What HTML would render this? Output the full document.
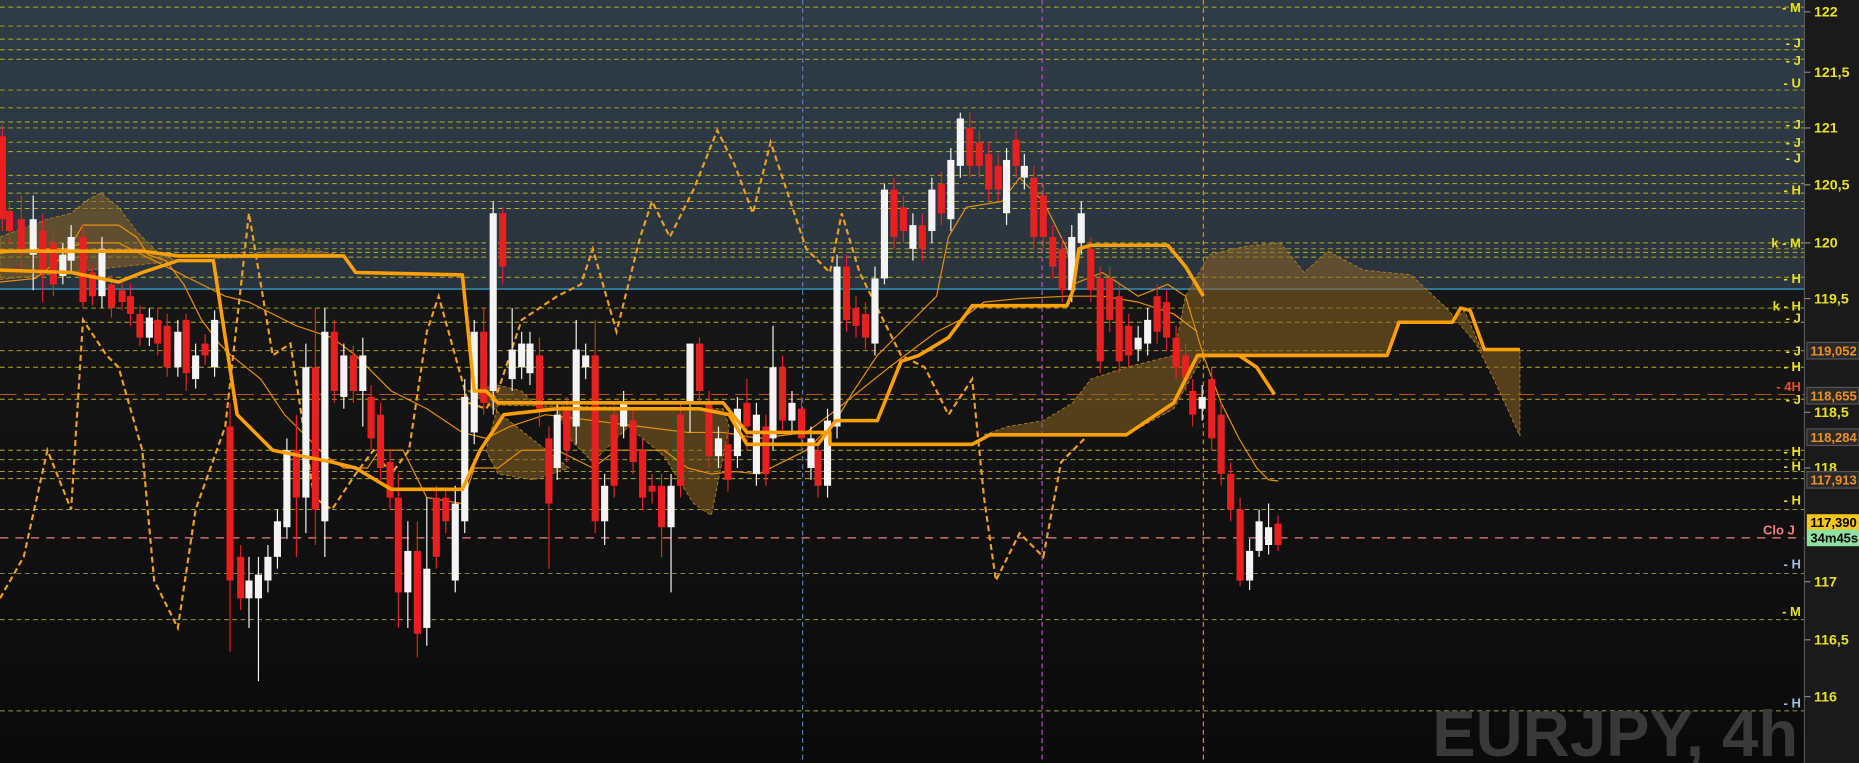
<!DOCTYPE html>
<html><head><meta charset="utf-8"><style>
html,body{margin:0;padding:0;background:#111;overflow:hidden}
svg{display:block}
</style></head><body>
<svg id="c" width="1859" height="763" viewBox="0 0 1568 644" preserveAspectRatio="none" xmlns="http://www.w3.org/2000/svg" font-family="Liberation Sans, sans-serif">
<defs>
<linearGradient id="bg" x1="0" y1="0" x2="0" y2="1">
<stop offset="0" stop-color="#1e1e1e"/><stop offset="1" stop-color="#0a0a0a"/></linearGradient>
<linearGradient id="up" x1="0" y1="0" x2="0" y2="1">
<stop offset="0" stop-color="#2e3c48"/><stop offset="1" stop-color="#2a343d"/></linearGradient>
</defs>
<rect x="0" y="0" width="1568" height="644" fill="url(#bg)"/>
<rect x="0" y="0" width="1522" height="244" fill="url(#up)"/>
<rect x="1522" y="0" width="46" height="644" fill="#1a1a1a"/>
<g id="levels"></g>
<line x1="0" y1="244" x2="1522" y2="244" stroke="#3ab0e8" stroke-width="1"/>
<line x1="677" y1="0" x2="677" y2="644" stroke="#5a7ad0" stroke-dasharray="4,3"/>
<line x1="879" y1="0" x2="879" y2="644" stroke="#c050d0" stroke-dasharray="4,3"/>
<line x1="1015" y1="0" x2="1015" y2="644" stroke="#d09030" stroke-dasharray="4,3"/>
<line x1="0" y1="454" x2="1522" y2="454" stroke="#f08080" stroke-dasharray="7,6"/>
<g fill="#8b6424" fill-opacity="0.55" stroke="#b07a20" stroke-dasharray="3,2" stroke-width="0.8">
<polygon points="0,200 40,185 60,180 75,168 85,163 100,175 115,195 135,215 150,220 0,236"/>
<polygon points="210,215 235,210 270,212 290,216 180,218"/>
<polygon points="395,330 420,325 440,330 455,345 470,345 480,370 500,390 530,360 560,385 585,425 600,435 615,360 610,345 420,342 410,380 420,400 450,405 480,395 410,340"/>
<polygon points="830,367 850,360 880,355 905,340 920,320 950,310 990,300 1000,250 1020,215 1050,208 1080,205 1100,230 1120,212 1150,228 1190,232 1220,260 1245,290 1260,320 1282,368 1282,296 1250,296 1235,262 1225,272 1180,272 1170,300 1015,300 990,345 950,367"/>
</g>
<g id="thin" fill="none" stroke="#e8900a" stroke-width="1">
<polyline points="0,238 30,235 55,215 70,190 100,190 115,200 125,215 140,220 155,240 170,270 185,290 195,300 220,320 240,350 260,370 275,385 290,395 310,395 320,380 340,380 360,420 390,425 400,395 420,395 440,380 470,380 500,395 520,380 560,380 580,395 600,400 620,398 640,400 660,390 680,380 705,355 720,330 740,300 770,270 790,250 800,200 815,175 845,170 860,150 880,170 900,210 905,240 930,230 960,250 985,240 1000,250 1015,300 1030,340 1045,370 1060,395 1070,405 1078,406"/>
<polyline points="0,214 30,210 55,210 70,205 100,205 120,215 140,225 170,240 190,250 210,255 250,275 280,285 300,300 330,330 360,345 390,365 410,370 430,360 460,350 500,355 540,360 580,365 610,365 640,370 680,365 700,350 750,310 790,280 810,270 830,255 860,252 900,250 930,250 960,255 990,265 1010,280"/>
</g>
<polyline fill="none" stroke="#f0a020" stroke-width="1.8" stroke-dasharray="5,3" points="0,505 20,470 40,380 60,430 70,270 90,300 100,310 120,380 130,490 150,530 165,430 190,360 210,180 230,300 245,290 265,420 280,430 300,400 315,380 330,400 345,380 360,280 370,250 395,340 410,345 420,330 440,270 470,250 490,240 500,210 520,280 540,200 550,170 565,200 585,160 605,110 620,140 635,180 650,120 660,150 680,210 700,230 710,180 725,230 740,260 760,300 780,310 800,350 820,320 830,420 840,490 860,450 880,470 895,390 915,370"/>
<g id="candles"></g>
<g fill="none" stroke="#ffa000" stroke-width="3" stroke-linejoin="round">
<polyline points="0,212 120,212 150,216 290,216 300,230 390,232 400,330 410,330 420,340 610,340 630,365 700,365 700,375 820,375 835,367 950,367 990,340 1010,300 1045,300 1060,310 1075,333"/>
<polyline points="0,228 60,230 100,238 120,230 150,220 180,220 200,350 230,380 280,390 300,395 330,413 390,413 405,380 425,350 470,345 590,345 615,350 630,375 690,375 705,355 740,355 760,305 775,300 800,285 820,258 900,258 905,245 910,210 920,207 985,207 1000,225 1015,250"/>
<polyline points="1010,300 1170,300 1180,272 1225,272 1232,260 1240,262 1252,295 1282,295"/>
</g>
<line x1="1522" y1="0" x2="1522" y2="644" stroke="#555"/>
<g id="axis" font-size="12" font-weight="bold" fill="#e8e020"></g>
<g font-size="11" font-weight="bold">
<rect x="1524" y="289" width="44" height="14" fill="#2a2a2a" stroke="#555"/><text x="1527" y="300" fill="#f09020">119,052</text>
<rect x="1524" y="327" width="44" height="14" fill="#2a2a2a" stroke="#555"/><text x="1527" y="338" fill="#f09020">118,655</text>
<rect x="1524" y="362" width="44" height="14" fill="#2a2a2a" stroke="#555"/><text x="1527" y="373" fill="#f09020">118,284</text>
<rect x="1524" y="398" width="44" height="14" fill="#2a2a2a" stroke="#555"/><text x="1527" y="409" fill="#f09020">117,913</text>
<rect x="1524" y="434" width="44" height="14" fill="#f5c518"/><text x="1527" y="445" fill="#000">117,390</text>
<rect x="1524" y="447" width="44" height="14" fill="#90e0a0"/><text x="1527" y="458" fill="#000">34m45s</text>
</g>
<text x="1487" y="451" font-size="11" fill="#f08080" font-weight="bold">Clo J</text>
<text x="1208" y="638" font-size="55" font-weight="bold" fill="#393939">EURJPY, 4h</text>
</svg>
<script>
var NS="http://www.w3.org/2000/svg";
function el(t,a,p){var e=document.createElementNS(NS,t);for(var k in a)e.setAttribute(k,a[k]);p.appendChild(e);return e;}
var lv=document.getElementById('levels');
[6,22,33,42,50,76,91,103,108,120,128,148,155,163,170,176,205,210,213,217,234,260,272,296,310,337,380,388,398,404,430,484,523,600].forEach(function(y){
 el('line',{x1:0,y1:y,x2:1522,y2:y,stroke:(y>480?'#9a9a40':'#b8b020'),'stroke-width':0.8,'stroke-dasharray':'4,3'},lv);});
el('line',{x1:0,y1:333,x2:1522,y2:333,stroke:'#c05020','stroke-width':0.8,'stroke-dasharray':'14,6'},lv);
var ax=document.getElementById('axis');
[[122,10],[121.5,61],[121,108],[120.5,156],[120,205],[119.5,252],[118.5,348],[118,395],[117,491],[116.5,540],[116,588]].forEach(function(p){
 el('line',{x1:1522,y1:p[1],x2:1527,y2:p[1],stroke:'#888'},ax);
 var t=el('text',{x:1530,y:p[1]+4},ax);t.textContent=String(p[0]).replace('.',',');});
var labs=[[6,'- M'],[36,'- J'],[51,'- J'],[70,'- U'],[105,'- J'],[120,'- J'],[133,'- J'],[160,'- H'],[205,'k - M'],[235,'- H'],[258,'k - H'],[268,'- J'],[296,'- J'],[309,'- H'],[337,'- J'],[381,'- H'],[393,'- H'],[422,'- H'],[476,'- H'],[516,'- M'],[593,'- H']];
labs.forEach(function(l){var t=el('text',{x:1519,y:l[0]+4,'text-anchor':'end','font-size':11,'font-weight':'bold',fill:(l[0]>470&&l[1].indexOf('H')>0?'#a0c0e0':'#e8e020')},ax);t.textContent=l[1];});
var t=el('text',{x:1519,y:330,'text-anchor':'end','font-size':11,'font-weight':'bold',fill:'#e05030'},ax);t.textContent='- 4H';
var C=[[2,115,185,105,195,'r'],[8,178,195,170,205,'r'],[18,185,210,165,235,'r'],[28,185,215,165,245,'w'],[36,195,230,180,255,'r'],[45,205,240,195,250,'r'],[53,215,233,205,240,'w'],[60,200,220,190,230,'w'],[70,200,255,190,260,'r'],[78,230,250,225,258,'r'],[86,210,250,200,260,'w'],[94,240,260,232,268,'r'],[103,245,255,238,262,'r'],[110,250,265,240,275,'r'],[118,265,285,258,292,'r'],[126,268,285,260,292,'w'],[133,270,290,260,300,'r'],[141,275,310,265,318,'r'],[150,280,310,270,318,'w'],[157,270,315,265,330,'r'],[165,300,320,290,328,'w'],[173,290,300,282,308,'r'],[181,270,310,262,318,'w'],[194,360,490,340,550,'r'],[203,470,505,460,515,'r'],[210,490,505,470,530,'w'],[218,485,505,470,575,'w'],[226,470,490,460,500,'w'],[234,440,470,430,480,'w'],[242,380,445,370,455,'w'],[250,380,420,350,470,'r'],[258,310,420,290,450,'w'],[266,310,430,260,460,'r'],[274,280,440,260,470,'w'],[282,280,330,270,340,'r'],[290,300,335,290,345,'w'],[298,300,330,292,340,'r'],[306,300,330,285,360,'w'],[313,335,370,325,380,'r'],[321,350,395,340,405,'r'],[329,390,420,380,430,'r'],[336,420,500,400,530,'r'],[344,465,500,440,530,'w'],[352,465,535,440,555,'r'],[360,480,530,420,545,'w'],[368,420,470,410,480,'r'],[376,420,440,412,450,'r'],[384,425,490,410,500,'w'],[392,335,440,320,450,'w'],[400,280,365,270,375,'w'],[408,280,340,260,350,'r'],[416,180,330,170,350,'w'],[424,180,225,175,240,'r'],[432,295,320,260,330,'w'],[440,290,310,280,320,'w'],[447,290,315,280,325,'w'],[455,300,345,285,360,'r'],[463,370,425,360,480,'r'],[470,350,395,340,405,'w'],[478,345,380,335,390,'r'],[486,295,360,270,375,'w'],[494,300,310,290,320,'w'],[502,300,440,270,450,'r'],[510,410,440,400,460,'w'],[518,350,410,340,420,'r'],[526,340,360,330,370,'w'],[534,355,390,345,400,'r'],[542,380,420,370,430,'r'],[550,410,415,400,425,'r'],[558,410,445,400,470,'r'],[566,410,445,400,500,'w'],[574,350,410,340,420,'r'],[582,290,340,290,365,'w'],[590,290,330,285,340,'r'],[598,340,385,330,395,'r'],[606,370,385,360,395,'w'],[614,375,405,365,415,'r'],[622,345,385,335,395,'w'],[630,340,360,320,380,'r'],[638,350,400,340,410,'w'],[646,360,400,350,410,'r'],[652,310,370,275,380,'w'],[660,310,355,300,365,'r'],[668,340,355,330,365,'w'],[676,345,370,335,380,'r'],[684,370,395,360,405,'w'],[690,380,410,370,420,'r'],[698,355,410,345,420,'w'],[706,225,360,215,370,'w'],[714,225,270,215,280,'r'],[722,260,275,250,285,'r'],[730,265,285,255,295,'r'],[738,235,290,225,300,'w'],[746,160,235,155,240,'w'],[754,160,200,150,210,'r'],[762,175,195,165,205,'r'],[770,190,210,180,220,'w'],[778,190,210,180,220,'r'],[786,160,195,150,205,'w'],[794,155,180,145,190,'r'],[802,135,185,125,195,'w'],[810,100,140,95,150,'w'],[818,108,140,95,150,'r'],[826,120,140,110,150,'r'],[834,130,160,120,170,'r'],[842,140,160,130,170,'r'],[849,135,180,125,190,'w'],[857,118,140,110,150,'r'],[864,140,150,130,160,'w'],[872,150,200,140,210,'r'],[880,165,200,155,210,'r'],[888,200,225,190,235,'r'],[896,210,245,200,255,'r'],[904,200,245,190,255,'w'],[912,180,205,170,215,'w'],[920,210,245,200,255,'r'],[928,235,305,225,315,'r'],[936,235,270,225,280,'r'],[944,250,305,240,315,'r'],[952,275,300,265,310,'r'],[960,285,295,275,305,'w'],[968,270,290,260,300,'w'],[976,250,280,240,290,'r'],[984,255,285,245,295,'r'],[992,285,310,275,320,'r'],[1000,300,320,290,330,'r'],[1006,330,350,320,360,'r'],[1014,335,345,325,355,'w'],[1022,320,370,310,380,'r'],[1030,350,400,340,410,'r'],[1038,400,430,390,440,'r'],[1046,430,490,420,495,'r'],[1054,465,490,455,498,'w'],[1062,440,465,430,470,'w'],[1070,445,460,425,468,'w'],[1078,442,460,435,465,'r']];
var cg=document.getElementById('candles');
C.forEach(function(c){var col=c[5]=='r'?'#e82020':'#f4f4f4';
 el('line',{x1:c[0],y1:c[3],x2:c[0],y2:c[4],stroke:col,'stroke-width':1},cg);
 el('rect',{x:c[0]-3,y:c[1],width:6,height:Math.max(1,c[2]-c[1]),fill:col},cg);});
</script>
</body></html>
